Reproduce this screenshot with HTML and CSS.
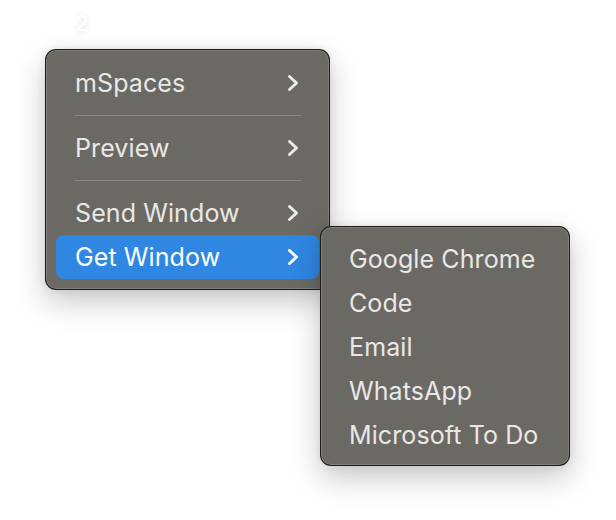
FILE: index.html
```html
<!DOCTYPE html>
<html>
<head>
<meta charset="utf-8">
<link rel="stylesheet" href="styles.css">
</head>
<body>
<div class="space-label">2</div>
<div class="menu main-menu">
  <div class="item"><span>mSpaces</span><svg class="chev" viewBox="0 0 12 18"><polyline points="2.5,2.5 9.5,9 2.5,15.5"/></svg></div>
  <div class="sep"></div>
  <div class="item"><span>Preview</span><svg class="chev" viewBox="0 0 12 18"><polyline points="2.5,2.5 9.5,9 2.5,15.5"/></svg></div>
  <div class="sep"></div>
  <div class="item"><span>Send Window</span><svg class="chev" viewBox="0 0 12 18"><polyline points="2.5,2.5 9.5,9 2.5,15.5"/></svg></div>
  <div class="item active"><span>Get Window</span><svg class="chev" viewBox="0 0 12 18"><polyline points="2.5,2.5 9.5,9 2.5,15.5"/></svg>
    <div class="menu submenu">
      <div class="item"><span>Google Chrome</span></div>
      <div class="item"><span>Code</span></div>
      <div class="item"><span>Email</span></div>
      <div class="item"><span>WhatsApp</span></div>
      <div class="item"><span>Microsoft To Do</span></div>
    </div>
  </div>
</div>
</body>
</html>
```

FILE: styles.css
```css
html, body {
  margin: 0;
  padding: 0;
  background: #ffffff;
}
body {
  font-family: Inter, "Noto Sans", "Liberation Sans", sans-serif;
  width: 616px;
  height: 520px;
  overflow: hidden;
}
.space-label {
  margin: 10px 0 0 75px;
  height: 26px;
  line-height: 26px;
  font-size: 22px;
  font-weight: 500;
  color: #ffffff;
  text-shadow: 0 0 6px rgba(0, 0, 0, 0.12);
}
.menu {
  box-sizing: border-box;
  background: #6b6964;
  border: 1px solid rgba(20, 20, 20, 0.9);
  border-radius: 11px;
  box-shadow: inset 0 0 0 1px rgba(255, 255, 255, 0.14), 0 12px 30px rgba(0, 0, 0, 0.22), 0 0 8px rgba(0, 0, 0, 0.08);
  display: flex;
  flex-direction: column;
}
.main-menu {
  margin: 13px 0 0 45px;
  width: 285px;
  padding: 11px 10px 10px 10px;
}
.item {
  position: relative;
  height: 44px;
  display: flex;
  align-items: center;
  justify-content: space-between;
  padding: 0 20px 0 19px;
  border-radius: 8px;
  color: #e9e8e6;
  font-size: 25px;
  font-weight: 420;
  letter-spacing: 0.1px;
}
.item.active {
  background: #2f87e1;
  color: #ffffff;
}
.chev {
  width: 12px;
  height: 18px;
  fill: none;
  stroke: #ebeae8;
  stroke-width: 3;
  stroke-linecap: round;
  stroke-linejoin: round;
}
.active .chev {
  stroke: #ffffff;
}
.sep {
  height: 1px;
  background: #8a8782;
  margin: 10px 17px 10px 19px;
}
.submenu {
  position: absolute;
  left: calc(100% + 1px);
  top: -9px;
  width: 250px;
  padding: 10px 10px 8px 10px;
}
.submenu .item {
  padding-left: 18px;
  white-space: nowrap;
}
```
